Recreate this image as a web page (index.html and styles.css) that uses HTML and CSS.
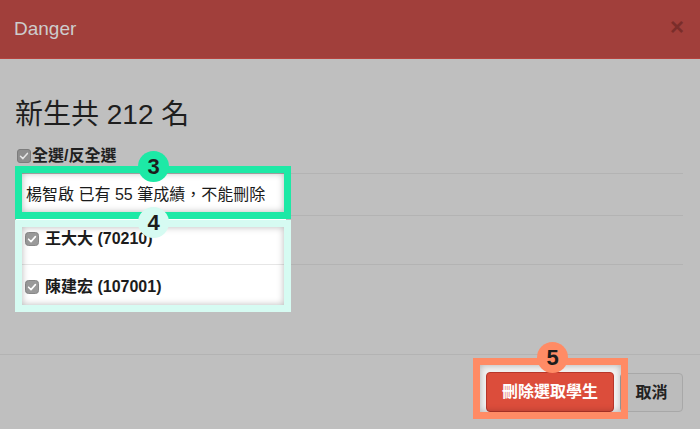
FILE: index.html
```html
<!DOCTYPE html>
<html lang="zh-Hant">
<head>
<meta charset="utf-8">
<title>Danger</title>
<link rel="stylesheet" href="styles.css">
</head>
<body>
<div class="modal">
  <div class="modal-header">
    <span class="modal-title">Danger</span>
    <span class="close">×</span>
  </div>
  <div class="modal-body">
    <h2 class="count">新生共 212 名</h2>
    <label class="select-all">
      <svg class="cb" width="14" height="14" viewBox="0 0 14 14"><rect x="0.5" y="0.5" width="13" height="13" rx="2.5" fill="#8e8e8e" stroke="#7c7c7c"/><path d="M3.5 7.2 L5.9 9.6 L10.4 4.4" fill="none" stroke="#e6e6e6" stroke-width="1.5" stroke-linecap="round" stroke-linejoin="round"/></svg>
      <span>全選/反全選</span>
    </label>
    <div class="list">
      <div class="row">
        <div class="cell cell-warn">楊智啟 已有 55 筆成績，不能刪除</div>
      </div>
      <div class="row">
        <div class="cell cell-student cell-first">
          <svg class="cb" width="14" height="14" viewBox="0 0 14 14"><rect x="0.5" y="0.5" width="13" height="13" rx="3" fill="#9a9a9a" stroke="#888"/><path d="M3.6 7.2 L6 9.6 L10.4 4.6" fill="none" stroke="#fff" stroke-width="1.6" stroke-linecap="round" stroke-linejoin="round"/></svg>
          <span class="name">王大大 (70210)</span>
        </div>
      </div>
      <div class="row">
        <div class="cell cell-student cell-last">
          <svg class="cb" width="14" height="14" viewBox="0 0 14 14"><rect x="0.5" y="0.5" width="13" height="13" rx="3" fill="#9a9a9a" stroke="#888"/><path d="M3.6 7.2 L6 9.6 L10.4 4.6" fill="none" stroke="#fff" stroke-width="1.6" stroke-linecap="round" stroke-linejoin="round"/></svg>
          <span class="name">陳建宏 (107001)</span>
        </div>
      </div>
    </div>
  </div>
  <div class="modal-footer">
    <span class="spot"><button class="btn btn-danger">刪除選取學生</button></span>
    <button class="btn btn-cancel">取消</button>
  </div>

  <div class="frame frame-green"></div>
  <div class="frame frame-cyan"></div>
  <div class="frame frame-orange"></div>
  <div class="badge badge-green badge-3">3</div>
  <div class="badge badge-cyan badge-4">4</div>
  <div class="badge badge-orange badge-5">5</div>
</div>
</body>
</html>
```
FILE: styles.css
```css
* { box-sizing: border-box; }
html, body {
  margin: 0;
  padding: 0;
  background: #bfbfbf;
}
body {
  font-family: "Liberation Sans", "Noto Sans CJK TC", sans-serif;
  color: #1f1f1f;
  width: 700px;
  height: 429px;
  overflow: hidden;
}
.modal {
  position: relative;
  width: 700px;
  height: 429px;
}
.modal-header {
  height: 59px;
  background: #a13f3b;
  border-bottom: 1px solid #b5433e;
  display: flex;
  align-items: center;
  justify-content: space-between;
  padding: 0 16px 0 14px;
}
.modal-title {
  color: #cdcdcd;
  font-size: 19px;
  line-height: 22px;
  margin-top: -1px;
}
.close {
  color: #7b2d2a;
  font-size: 24px;
  font-weight: bold;
  line-height: 20px;
  margin-top: -4px;
}
.modal-body {
  padding: 0 17px 43px 16px;
}
.count {
  margin: 40px 0 0 -1px;
  font-size: 28px;
  line-height: 32px;
  font-weight: normal;
  color: #1e1e1e;
}
.select-all {
  display: flex;
  align-items: center;
  gap: 1px;
  margin-top: 15px;
  height: 20px;
  font-size: 16px;
  font-weight: bold;
  line-height: 20px;
  padding-left: 1px;
}
.list {
  margin-top: 7px;
}
.row {
  border-top: 1px solid #b3b3b3;
}
.cell {
  width: 270px;
  background: #fff;
  font-size: 16px;
  line-height: 20px;
}
.cell-warn {
  height: 38px;
  padding: 11px 0 0 10px;
  color: #1a1a1a;
  margin-bottom: 3px;
}
.cell-student {
  display: flex;
  align-items: center;
  gap: 6px;
  padding-left: 9px;
  font-weight: bold;
  color: #1c1c1c;
}
.cell-first {
  height: 48px;
  align-items: flex-start;
  padding-top: 13px;
}
.cell-first .cb { margin-top: 3px; }
.cell-last {
  height: 47px;
  margin-top: -1px;
  border-top: 1px solid #e6e6e6;
  align-items: flex-start;
  padding-top: 12px;
}
.cell-last .cb { margin-top: 3px; }
.modal-footer {
  border-top: 1px solid #b3b3b3;
  display: flex;
  justify-content: flex-end;
  align-items: flex-start;
  padding: 10px 17px 0 0;
  height: 75px;
}
.spot {
  display: block;
  background: #f2f2f2;
  padding: 7px 7px 0 6px;
  height: 47px;
}
.btn {
  font-family: "Liberation Sans", "Noto Sans CJK TC", sans-serif;
  font-size: 16px;
  line-height: 20px;
  border-radius: 4px;
  cursor: pointer;
}
.btn-danger {
  width: 128px;
  height: 40px;
  background: #dc4d3b;
  border: 1px solid #b9372b;
  color: #fff;
  font-weight: bold;
}
.btn-cancel {
  width: 63px;
  height: 39px;
  margin: 8px 0 0 -1px;
  background: #bcbcbc;
  border: 1px solid #a8a8a8;
  color: #222;
  font-weight: bold;
}
.frame {
  position: absolute;
  border: 7px solid;
  box-shadow: inset 0 0 7px rgba(0, 0, 0, 0.28);
}
.frame-green {
  left: 15px; top: 166px; width: 276px; height: 53px;
  border-color: #1de9a6;
}
.frame-cyan {
  left: 15px; top: 220px; width: 276px; height: 92px;
  border-color: #d6fbf2;
}
.frame-orange {
  left: 473px; top: 358px; width: 155px; height: 61px;
  border-color: #ff8b65;
}
.badge {
  position: absolute;
  width: 31px;
  height: 31px;
  border-radius: 50%;
  display: flex;
  align-items: center;
  justify-content: center;
  font-size: 22px;
  font-weight: bold;
  color: #1c1c1c;
  line-height: 1;
}
.badge-green { background: #1de9a6; }
.badge-cyan { background: #d6fbf2; }
.badge-orange { background: #ff8b65; }
.badge-3 { left: 138px; top: 151px; }
.badge-4 { left: 138px; top: 207px; }
.badge-5 { left: 537px; top: 342px; }
```
